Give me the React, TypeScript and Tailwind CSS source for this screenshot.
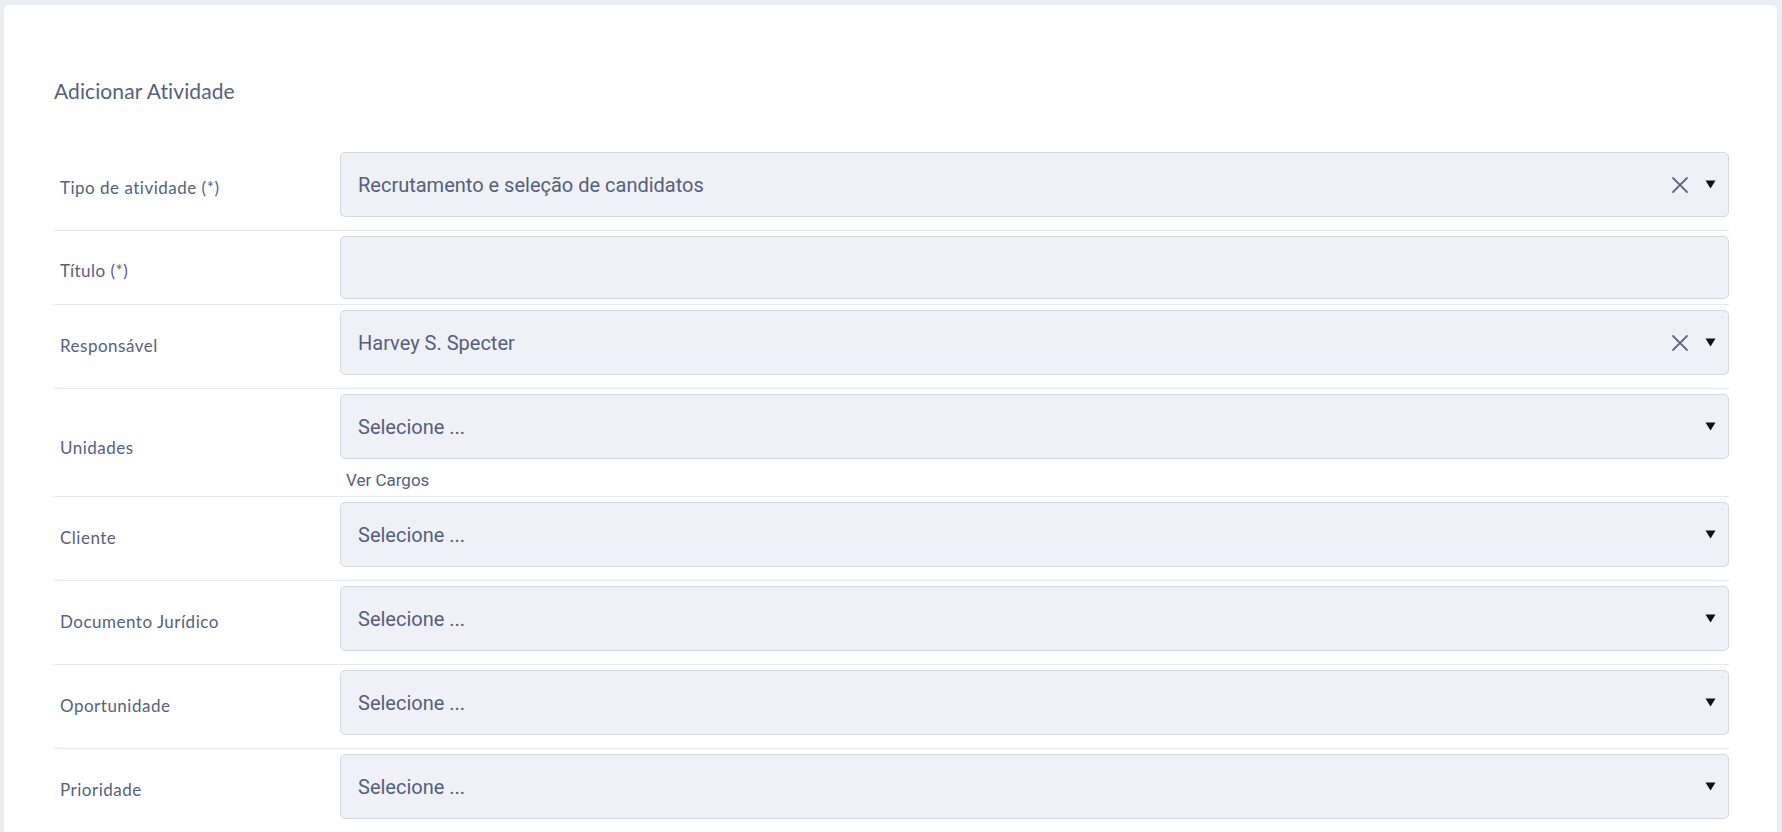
import React from "react";

const labelFont = { fontFamily: "Lato, 'Open Sans', sans-serif" };

function Caret() {
  return (
    <svg width="11" height="9" viewBox="0 0 11 9" className="shrink-0">
      <path d="M0.5 0.5 H10.5 L5.5 8.5 Z" fill="#111" />
    </svg>
  );
}

function ClearX() {
  return (
    <svg width="18" height="18" viewBox="0 0 18 18" className="shrink-0">
      <path d="M2 2 L16 16 M16 2 L2 16" stroke="#5d6985" strokeWidth="1.8" strokeLinecap="round" />
    </svg>
  );
}

function SelectBox({ value, placeholder, clearable, h = "h-[65px]" }: { value?: string; placeholder?: string; clearable?: boolean; h?: string }) {
  return (
    <div className={`flex ${h} w-full items-center rounded-[5px] border border-[#d5d8e3] bg-[#f0f1f6] pl-[17px] pr-[12px] font-['Roboto',sans-serif] text-[20px] text-[#545f80]`}>
      <span className="flex-1 truncate">{value ?? placeholder}</span>
      {clearable && (
        <span className="mr-[16px] flex items-center">
          <ClearX />
        </span>
      )}
      <Caret />
    </div>
  );
}

function Row({ label, children, pb = "pb-[13px]" }: { label: string; children: React.ReactNode; pb?: string }) {
  return (
    <div className={`flex items-center border-b border-[#e7e8ef] pt-[5px] ${pb}`}>
      <div className="w-[286px] shrink-0 pl-[6px] pt-[6px] text-[17px] tracking-[0.5px] text-[#55617f]" style={labelFont}>
        {label}
      </div>
      <div className="flex-1">{children}</div>
    </div>
  );
}

export default function App() {
  return (
    <div className="min-h-[832px] w-full bg-[#ececf3] pl-[4px] pr-[5px] pt-[5px]">
      <div className="rounded-t-[5px] bg-white pl-[50px] pr-[48px] pt-[71px]">
        <h1 className="text-[21px] leading-[30px] tracking-[0.1px] text-[#55617f]" style={labelFont}>
          Adicionar Atividade
        </h1>
        <div className="mt-[41px]">
          <Row label="Tipo de atividade (*)">
            <SelectBox value="Recrutamento e seleção de candidatos" clearable />
          </Row>
          <Row label="Título (*)" pb="pb-[5px]">
            <div className="h-[63px] w-full rounded-[5px] border border-[#d5d8e3] bg-[#f0f1f6]" />
          </Row>
          <Row label="Responsável">
            <SelectBox value="Harvey S. Specter" clearable />
          </Row>
          <Row label="Unidades" pb="pb-[0px]">
            <SelectBox placeholder="Selecione ..." />
            <div className="pl-[6px] pt-[10px] pb-[5px] font-['Roboto',sans-serif] text-[17px] leading-[22px] text-[#545f80]">Ver Cargos</div>
          </Row>
          <Row label="Cliente">
            <SelectBox placeholder="Selecione ..." />
          </Row>
          <Row label="Documento Jurídico">
            <SelectBox placeholder="Selecione ..." />
          </Row>
          <Row label="Oportunidade">
            <SelectBox placeholder="Selecione ..." />
          </Row>
          <Row label="Prioridade">
            <SelectBox placeholder="Selecione ..." />
          </Row>
        </div>
      </div>
    </div>
  );
}
